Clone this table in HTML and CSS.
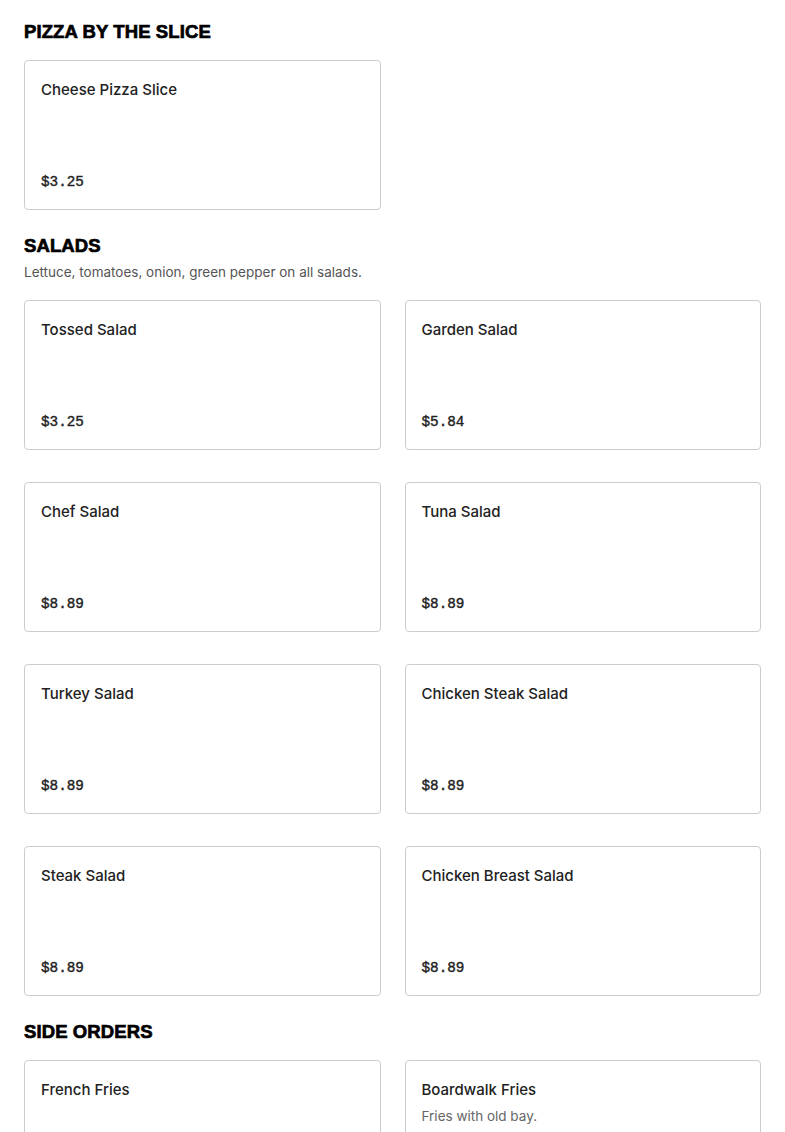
FILE: index.html
```html
<!DOCTYPE html>
<html lang="en">
<head>
<meta charset="utf-8">
<title>Menu</title>
<link rel="stylesheet" href="styles.css">
</head>
<body>
<main class="menu">
  <section class="section">
    <h2 class="section-title">PIZZA BY THE SLICE</h2>
    <div class="grid">
      <div class="card"><div class="card-body"><h3 class="item-name">Cheese Pizza Slice</h3></div><div class="price">$3.25</div></div>
    </div>
  </section>
  <section class="section">
    <h2 class="section-title">SALADS</h2>
    <p class="section-desc">Lettuce, tomatoes, onion, green pepper on all salads.</p>
    <div class="grid">
      <div class="card"><div class="card-body"><h3 class="item-name">Tossed Salad</h3></div><div class="price">$3.25</div></div>
      <div class="card"><div class="card-body"><h3 class="item-name">Garden Salad</h3></div><div class="price">$5.84</div></div>
      <div class="card"><div class="card-body"><h3 class="item-name">Chef Salad</h3></div><div class="price">$8.89</div></div>
      <div class="card"><div class="card-body"><h3 class="item-name">Tuna Salad</h3></div><div class="price">$8.89</div></div>
      <div class="card"><div class="card-body"><h3 class="item-name">Turkey Salad</h3></div><div class="price">$8.89</div></div>
      <div class="card"><div class="card-body"><h3 class="item-name">Chicken Steak Salad</h3></div><div class="price">$8.89</div></div>
      <div class="card"><div class="card-body"><h3 class="item-name">Steak Salad</h3></div><div class="price">$8.89</div></div>
      <div class="card"><div class="card-body"><h3 class="item-name">Chicken Breast Salad</h3></div><div class="price">$8.89</div></div>
    </div>
  </section>
  <section class="section">
    <h2 class="section-title">SIDE ORDERS</h2>
    <div class="grid">
      <div class="card"><div class="card-body"><h3 class="item-name">French Fries</h3></div></div>
      <div class="card"><div class="card-body"><h3 class="item-name">Boardwalk Fries</h3><p class="item-desc">Fries with old bay.</p></div></div>
    </div>
  </section>
</main>
</body>
</html>
```
FILE: styles.css
```css
* { box-sizing: border-box; }
html, body { margin: 0; padding: 0; background: #fff; }
body {
  font-family: "Inter", "Liberation Sans", Arial, sans-serif;
  color: #222;
}
.menu {
  padding: 19px 24px 24px;
}
.section + .section { margin-top: 23px; }
.section-title {
  margin: 0 0 16px;
  padding-top: 1px;
  font-family: "Liberation Sans", Arial, sans-serif;
  font-weight: 900;
  font-size: 18.5px;
  line-height: 24px;
  color: #000;
  letter-spacing: 0.1px;
  -webkit-text-stroke: 0.7px #000;
}
.section-desc {
  margin: -12px 0 18px;
  font-size: 13.5px;
  line-height: 20px;
  color: #555;
}
.grid {
  display: grid;
  grid-template-columns: 1fr 1fr;
  column-gap: 24px;
  row-gap: 32px;
}
.card {
  height: 150px;
  border: 1px solid #ccc;
  border-radius: 4px;
  padding: 16px;
  display: flex;
  flex-direction: column;
  justify-content: space-between;
}
.item-name {
  margin: 0;
  padding-top: 1px;
  font-size: 15px;
  font-weight: 500;
  line-height: 24px;
  color: #222;
}
.item-desc {
  margin: 4px 0 0;
  font-size: 13.5px;
  line-height: 20px;
  color: #666;
}
.price {
  font-family: "Liberation Mono", "Courier New", monospace;
  font-size: 14.3px;
  font-weight: 400;
  line-height: 22px;
  color: #222;
  -webkit-text-stroke: 0.4px #222;
}
```
